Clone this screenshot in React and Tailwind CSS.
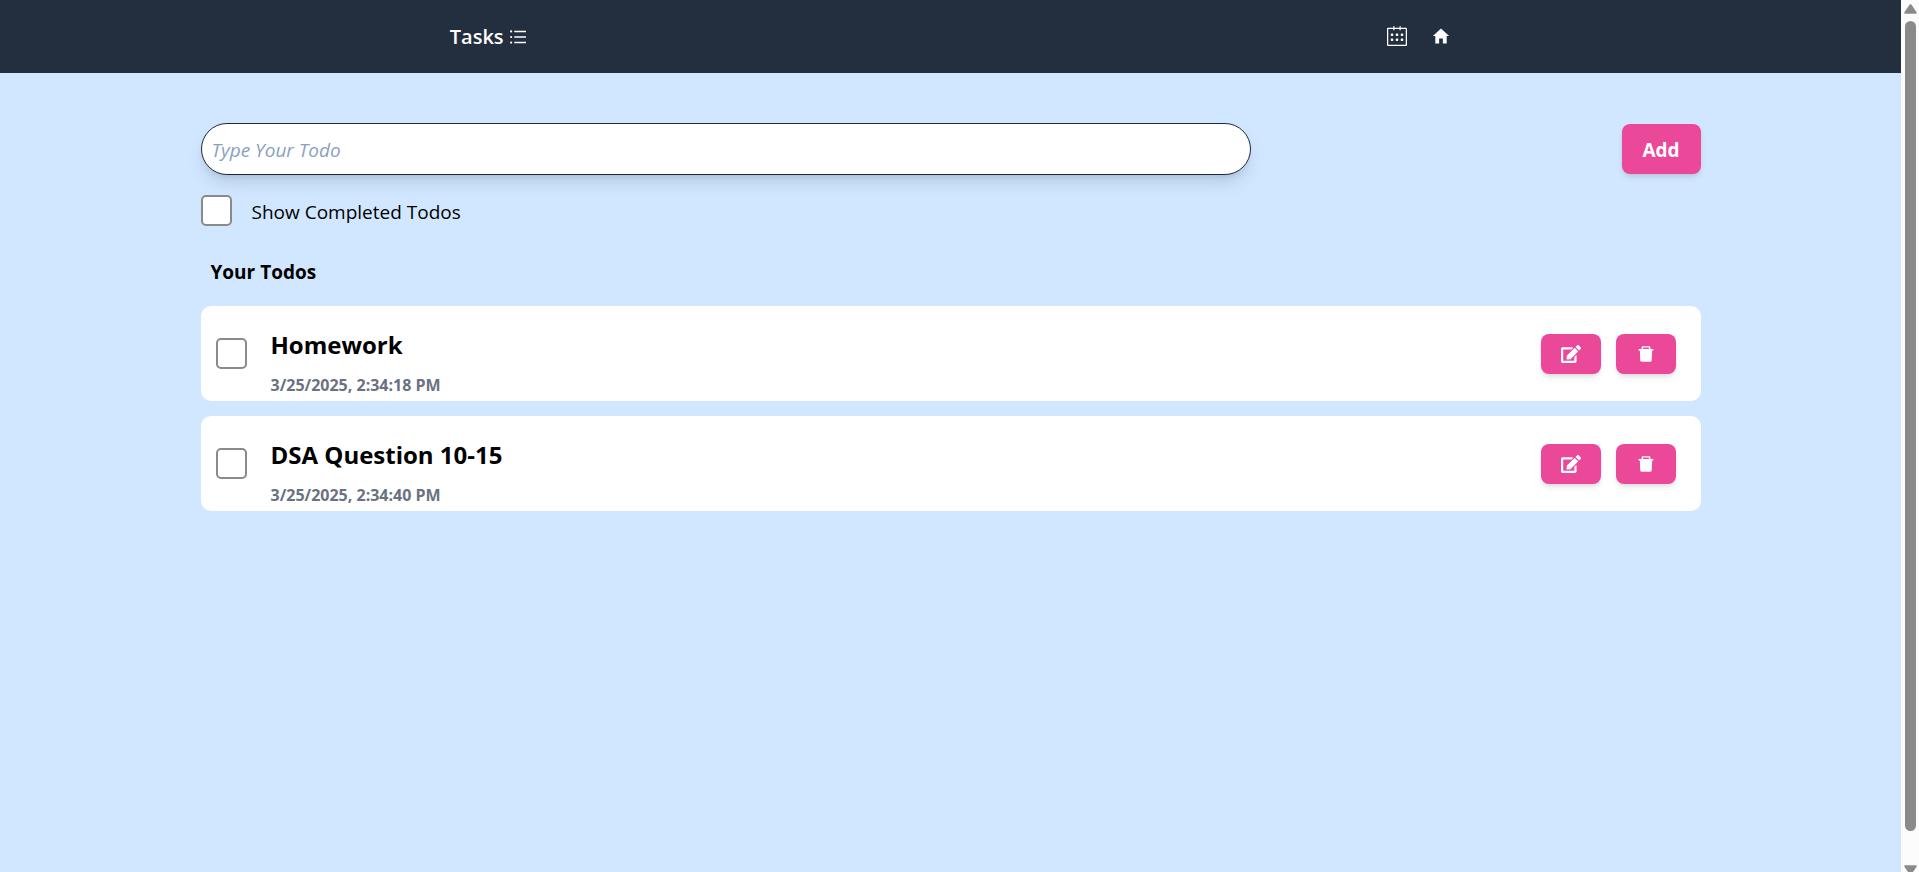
import React, { useState } from 'react';
import { AiFillDelete, AiOutlineUnorderedList } from 'react-icons/ai';
import { FaEdit } from 'react-icons/fa';
import { IoMdHome } from 'react-icons/io';
import { SlCalender } from 'react-icons/sl';

const initialTodos = [
    { id: 1, todo: 'Homework', date: '3/25/2025, 2:34:18 PM', done: false },
    { id: 2, todo: 'DSA Question 10-15', date: '3/25/2025, 2:34:40 PM', done: false },
];

const checkbox =
    'size-[31px] shrink-0 appearance-none rounded-[5px] border-2 border-[#8a8a8a] bg-white checked:bg-pink-500';

function Navbar() {
    return (
        <nav className="flex h-[73px] items-center justify-around bg-[#232f3e] px-5 text-white">
            <a href="#" className="flex items-center gap-1 text-xl font-semibold">
                Tasks <AiOutlineUnorderedList className="size-5" />
            </a>
            <div className="flex items-center gap-6 pb-0.5">
                <a href="#calendar" aria-label="Calendar">
                    <SlCalender className="size-5" />
                </a>
                <a href="#home" aria-label="Home">
                    <IoMdHome className="size-5" />
                </a>
            </div>
        </nav>
    );
}

function TodoItem({ item, onToggle, onDelete }) {
    return (
        <li className="flex h-[95px] items-center justify-between rounded-[10px] bg-white pl-[15px] pr-[25px]">
            <div className="flex items-center gap-6">
                <input
                    type="checkbox"
                    id={`todo-${item.id}`}
                    checked={item.done}
                    onChange={onToggle}
                    className={checkbox}
                />
                <div className="pt-[22px]">
                    <label htmlFor={`todo-${item.id}`} className="block text-2xl leading-10 font-bold">
                        {item.todo}
                    </label>
                    <p className="text-base leading-10 font-bold text-gray-500">{item.date}</p>
                </div>
            </div>
            <div className="flex gap-[15px]">
                <button
                    aria-label="Edit"
                    className="flex h-10 w-[60px] items-center justify-center rounded-lg bg-[#ec4899] text-white shadow-md"
                >
                    <FaEdit className="size-5" />
                </button>
                <button
                    aria-label="Delete"
                    onClick={onDelete}
                    className="flex h-10 w-[60px] items-center justify-center rounded-lg bg-[#ec4899] text-white shadow-md"
                >
                    <AiFillDelete className="size-5" />
                </button>
            </div>
        </li>
    );
}

// Thin grey scroll track on the right edge
function ScrollTrack() {
    return (
        <div aria-hidden="true" className="sticky top-0 flex h-screen w-[18px] shrink-0 flex-col items-center overflow-hidden bg-[#fcfcfc] pt-1">
            <svg viewBox="0 0 13 10" className="h-2.5 w-[13px] shrink-0 fill-[#8a8a8a]">
                <path d="M5.7.6 .4 8.2Q0 9.7 1 9.7h11q1 0 .6-1.5L7.3.6q-.8-.8-1.6 0z" />
            </svg>
            <div className="mt-[7px] w-[11px] grow rounded-full bg-[#8a8a8a]" />
            <svg viewBox="0 0 13 10" className="mt-[34px] -mb-[3px] h-2.5 w-[13px] shrink-0 rotate-180 fill-[#8a8a8a]">
                <path d="M5.7.6 .4 8.2Q0 9.7 1 9.7h11q1 0 .6-1.5L7.3.6q-.8-.8-1.6 0z" />
            </svg>
        </div>
    );
}

export default function App() {
    const [text, setText] = useState('');
    const [todos, setTodos] = useState(initialTodos);
    const [showDone, setShowDone] = useState(false);

    const handleAdd = (e) => {
        e.preventDefault();
        if (!text.trim()) return;
        setTodos([...todos, { id: Date.now(), todo: text, date: new Date().toLocaleString('en-US'), done: false }]);
        setText('');
    };

    const toggle = (id) => setTodos(todos.map((t) => (t.id === id ? { ...t, done: !t.done } : t)));
    const remove = (id) => setTodos(todos.filter((t) => t.id !== id));

    return (
        <div className="flex min-h-screen bg-[#d1e7ff] font-['Open_Sans','Noto_Sans',sans-serif] text-black">
            <div className="min-w-0 grow">
                <Navbar />
                <main className="mx-auto max-w-[1500px] pt-[50px]">
                    <form onSubmit={handleAdd} className="flex items-center justify-between">
                        <input
                            type="text"
                            aria-label="Todo"
                            placeholder="Type Your Todo"
                            value={text}
                            onChange={(e) => setText(e.target.value)}
                            className="h-[52px] w-[70%] rounded-full border border-slate-800 bg-white px-2.5 pt-0.5 text-[19px] shadow-lg shadow-slate-500/25 placeholder:text-[#8aa0bf] placeholder:italic"
                        />
                        <button type="submit" className="h-[50px] w-[79px] rounded-lg bg-[#ec4899] pt-0.5 text-[19px] font-bold text-white shadow-md">
                            Add
                        </button>
                    </form>
                    <div className="mt-5 flex items-center gap-5">
                        <input
                            type="checkbox"
                            id="show"
                            checked={showDone}
                            onChange={() => setShowDone(!showDone)}
                            className={checkbox}
                        />
                        <label htmlFor="show" className="pt-0.5 text-[19px] leading-7 font-medium">Show Completed Todos</label>
                    </div>
                    <h2 className="mt-[30px] pl-2.5 text-[19px] leading-8 font-bold">Your Todos</h2>
                    <ul className="mt-[18px] flex flex-col gap-[15px]">
                        {todos
                            .filter((t) => showDone || !t.done)
                            .map((t) => (
                                <TodoItem key={t.id} item={t} onToggle={() => toggle(t.id)} onDelete={() => remove(t.id)} />
                            ))}
                    </ul>
                </main>
            </div>
            <ScrollTrack />
        </div>
    );
}
